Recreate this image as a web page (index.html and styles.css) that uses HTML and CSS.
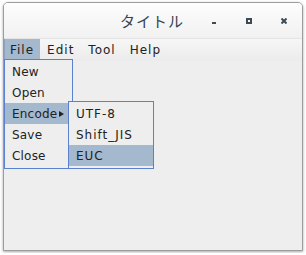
FILE: index.html
```html
<!DOCTYPE html>
<html lang="ja">
<head>
    <meta charset="UTF-8">
    <title>タイトル</title>
    <link rel="stylesheet" href="styles.css">
</head>
<body>
    <div class="window">
        <div class="titlebar">
            <span class="title">タイトル</span>
            <div class="controls">
                <span class="ctl ctl-min"><svg width="6" height="6" viewBox="0 0 6 6"><rect x="1" y="4" width="4" height="2" fill="#3d4b56"/></svg></span>
                <span class="ctl ctl-max"><svg width="6" height="6" viewBox="0 0 6 6"><rect x="1" y="1" width="4" height="4" fill="none" stroke="#3d4b56" stroke-width="2"/></svg></span>
                <span class="ctl ctl-close"><svg width="6" height="6" viewBox="0 0 6 6"><path d="M0.5 0.5 L5.5 5.5 M5.5 0.5 L0.5 5.5" stroke="#3d4b56" stroke-width="2"/></svg></span>
            </div>
        </div>
        <div class="menubar">
            <span class="menu active">File</span>
            <span class="menu">Edit</span>
            <span class="menu">Tool</span>
            <span class="menu">Help</span>
        </div>
        <div class="content"></div>

        <ul class="dropdown file-menu">
            <li>New</li>
            <li>Open</li>
            <li class="selected has-sub">Encode<span class="arrow"></span></li>
            <li>Save</li>
            <li>Close</li>
        </ul>
        <ul class="dropdown sub-menu">
            <li>UTF-8</li>
            <li>Shift_JIS</li>
            <li class="selected">EUC</li>
        </ul>
    </div>
</body>
</html>
```

FILE: styles.css
```css
html,
body {
    margin: 0;
    padding: 0;
    background-color: #fff;
}

body {
    padding: 2px 3px;
    font-family: "DejaVu Sans", "Noto Sans CJK JP", sans-serif;
}

.window {
    position: relative;
    width: 298px;
    height: 247px;
    border: 1px solid #9c9c9c;
    border-radius: 5px 5px 0 0;
    background-color: #eeeeee;
    box-shadow: 0 1px 3px rgba(0, 0, 0, .35);
    display: flex;
    flex-direction: column;
    overflow: hidden;
}

.titlebar {
    height: 35px;
    display: flex;
    align-items: center;
    background: linear-gradient(#fdfdfd, #f1f1f1);
}

.title {
    margin-left: 116px;
    font-family: "Noto Sans CJK JP", sans-serif;
    font-size: 15px;
    letter-spacing: 1px;
    color: #37444f;
}

.controls {
    margin-left: auto;
    margin-right: 15px;
    display: flex;
    gap: 29px;
}

.ctl {
    display: flex;
}

.menubar {
    height: 22px;
    display: flex;
    align-items: stretch;
    background: linear-gradient(#f6f6f6, #ebebeb);
    border-top: 1px solid #e4e4e4;
}

.menu {
    padding: 0 7px 0 7px;
    font-size: 12px;
    letter-spacing: 1px;
    line-height: 23px;
    color: #222;
}

.menu.active {
    background-color: #a4b8ce;
    border-left: 1px solid #8da3bb;
    padding-left: 5px;
    padding-right: 6px;
}

.content {
    flex: 1;
}

.dropdown {
    position: absolute;
    margin: 0;
    padding: 1px 0 2px;
    list-style: none;
    background-color: #eeeeee;
    border: 1px solid #5b80cd;
}

.dropdown li {
    position: relative;
    height: 21px;
    line-height: 23px;
    padding-left: 7px;
    font-size: 12px;
    letter-spacing: 0.2px;
    color: #222;
}

.sub-menu li {
    letter-spacing: 1px;
}

.dropdown li.selected {
    background-color: #a4b8ce;
}

.file-menu {
    left: 0;
    top: 56px;
    width: 67px;
}

.sub-menu {
    left: 64px;
    top: 98px;
    width: 84px;
}

.arrow {
    position: absolute;
    left: 54px;
    top: 8px;
    width: 0;
    height: 0;
    border-top: 3.5px solid transparent;
    border-bottom: 3.5px solid transparent;
    border-left: 5px solid #222;
}
```
